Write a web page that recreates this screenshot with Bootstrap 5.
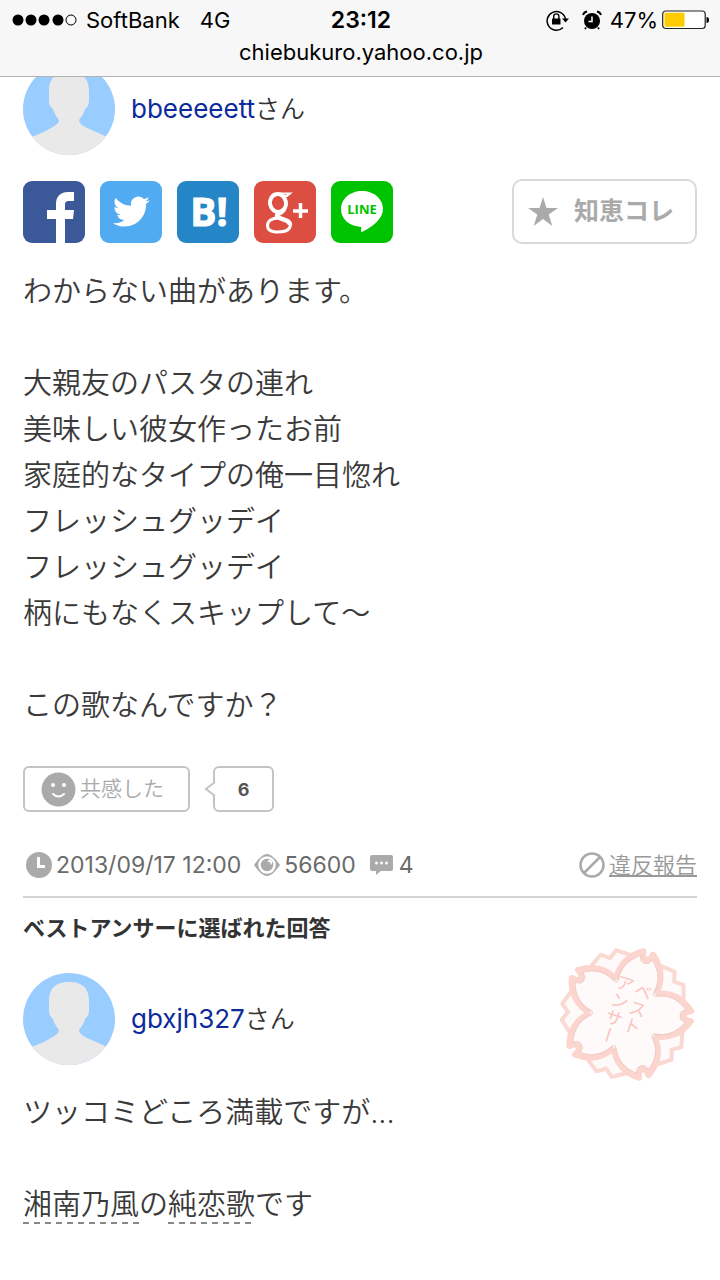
<!DOCTYPE html>
<html lang="ja">
<head>
<meta charset="utf-8">
<meta name="viewport" content="width=device-width, initial-scale=1">
<title>chiebukuro.yahoo.co.jp</title>
<link href="https://cdn.jsdelivr.net/npm/bootstrap@5.3.0/dist/css/bootstrap.min.css" rel="stylesheet">
<style>
  body { font-family: Inter, "Noto Sans CJK JP", sans-serif; color: #333; background: #fff; }
  svg { display: block; flex-shrink: 0; }
  .phone-bar { background: #f7f7f7; border-bottom: 1px solid #b2b2b2; color: #000; font-size: 22px; line-height: 32px; padding: 4px 10px 8px 12px; }
  .status-grid { display: grid; grid-template-columns: 1fr auto 1fr; }
  .clock { font-size: 23px; font-weight: 600; }
  .page { padding: 0 23px 30px; }
  .asker { margin-top: -14px; }
  .user-row { column-gap: 16px; font-size: 26px; }
  .user-row a { color: #0c2a9c; }
  .user-row .honorific { font-size: 25px; font-weight: 350; }
  .share-row { margin-top: 24px; }
  .share-list { gap: 15px; }
  .share-list svg { border-radius: 9px; }
  .collect { width: 185px; height: 65px; border: 2px solid #d9d9d9; border-radius: 10px; color: #aaa; font-size: 25px; font-weight: 700; gap: 16px; background: #fff; padding: 0 0 0 14px; }
  .post { font-size: 29px; line-height: 46px; font-weight: 350; color: #3a3a3a; }
  .question { margin-top: 25px; }
  .react-row { margin-top: 37px; gap: 23px; }
  .react { height: 46px; width: 167px; border: 2px solid #c4c4c4; border-radius: 6px; color: #aaa; font-size: 21px; font-weight: 350; gap: 4px; background: #fff; }
  .bubble { position: relative; height: 46px; width: 61px; border: 2px solid #c4c4c4; border-radius: 6px; color: #555; font-size: 18px; font-weight: 700; }
  .bubble svg { position: absolute; left: -11px; top: 12px; }
  .meta-row { margin-top: 35px; padding-bottom: 13px; border-bottom: 2px solid #d4d4d4; color: #6a6a6a; font-size: 23px; line-height: 36px; }
  .meta-list { gap: 13px; padding-left: 3px; }
  .meta-row .report { color: #999; font-size: 22px; font-weight: 350; gap: 4px; }
  .best-title { margin: 14px 0 0; font-size: 22px; line-height: 32px; font-weight: 700; }
  .answerer { margin-top: 29px; }
  .stamp { margin: -30px 0 -19px; }
  .answer { margin-top: 25px; }
  .keyword { color: inherit; text-decoration: none; background: repeating-linear-gradient(90deg, #888 0 6px, transparent 6px 11px) left bottom / 100% 2px no-repeat; padding-bottom: 2px; }
</style>
</head>
<body>
<svg width="0" height="0" class="position-absolute" aria-hidden="true">
  <defs>
    <symbol id="person" viewBox="0 0 92 92">
      <clipPath id="round"><circle cx="46" cy="46" r="46"/></clipPath>
      <g clip-path="url(#round)">
        <rect width="92" height="92" fill="#99ccff"/>
        <path fill="#e9e9e9" d="M26 28C26 14 34 9 46 9S66 14 66 28V38Q66 43 62 46C61 51 58 54 56 57Q56 61 64 65Q76 70 84 74V92H8V74Q20 70 28 65Q36 61 36 57C33 53 31 50 30 46Q26 43 26 38Z"/>
      </g>
    </symbol>
    <path id="petal" d="M29-21C44-24 57-17 65-5L60-4L57 0L60 4L65 5C57 17 44 24 29 21"/>
    <path id="petal-line" d="M27-19C42-22 53-15 60-6L55-4L54 0L55 4L60 6C53 15 42 22 27 19"/>
    <path id="leaf" d="M29-21L56-20L64-8L58 0L64 8L56 20L29 21"/>
  </defs>
</svg>

<header class="phone-bar sticky-top">
  <div class="status-grid align-items-center">
    <div class="d-flex align-items-center">
      <svg width="66" height="12" viewBox="0 0 66 12"><circle cx="6" cy="6" r="5.5"/><circle cx="19" cy="6" r="5.5"/><circle cx="32" cy="6" r="5.5"/><circle cx="46" cy="6" r="5.5"/><circle cx="59" cy="6" r="5" fill="none" stroke="#000"/></svg>
      <span class="ms-2">SoftBank</span><span class="ms-3 ps-1">4G</span>
    </div>
    <div class="clock">23:12</div>
    <div class="d-flex align-items-center justify-content-end">
      <svg width="24" height="22" viewBox="0 0 24 22"><path d="M17 18.500A9.300 9.300 0 1 1 19.500 10" fill="none" stroke="#000" stroke-width="1.500"/><path d="M16 9.500H23L19.500 13.500Z"/><rect x="6" y="9.500" width="8.500" height="6" rx=".6"/><path d="M7.700 10V7.500a2.600 2.600 0 0 1 5.200 0V10" fill="none" stroke="#000" stroke-width="1.400"/></svg>
      <svg class="ms-2 me-2 ps-1" width="24" height="20" viewBox="0 0 20 20"><circle cx="10" cy="11" r="8"/><path d="M10 6.500V11.500H6.500" fill="none" stroke="#fff" stroke-width="1.500"/><path d="M1 5Q2 2 5 1.500M19 5Q18 2 15 1.500M4 17.500L3 19M16 17.500L17 19" fill="none" stroke="#000" stroke-width="1.800"/></svg>
      <span>47%</span>
      <svg class="ms-1" width="48" height="20" viewBox="0 0 48 20"><rect x=".7" y="1" width="42.500" height="17.500" rx="3" fill="#fff" stroke="#222" stroke-width="1.200"/><rect x="2.500" y="2.800" width="20" height="14" rx="1" fill="#fc0"/><path d="M44.500 7Q47 7 47 10T44.500 13Z"/></svg>
    </div>
  </div>
  <div class="text-center">chiebukuro.yahoo.co.jp</div>
</header>

<main class="page">
  <div class="user-row asker d-flex align-items-center">
    <svg width="92" height="92"><use href="#person"/></svg>
    <div><a href="#" class="text-decoration-none">bbeeeeett</a><span class="honorific">さん</span></div>
  </div>

  <div class="share-row d-flex align-items-center justify-content-between">
    <div class="share-list d-flex">
      <a href="#" aria-label="Facebook"><svg width="62" height="62"><rect width="62" height="62" fill="#3b5998"/><path fill="#fff" d="M33 62V38H24V29H33V23C33 15 38 11 45 11H51V20H46C43 20 42 21 42 24V29H51L50 38H42V62Z"/></svg></a>
      <a href="#" aria-label="Twitter"><svg width="62" height="62"><rect width="62" height="62" fill="#50abf1"/><path fill="#fff" transform="translate(13 11) scale(2.300)" d="M5.026 15c6.038 0 9.341-5.003 9.341-9.334 0-.14 0-.282-.006-.422A6.685 6.685 0 0 0 16 3.542a6.658 6.658 0 0 1-1.889.518 3.301 3.301 0 0 0 1.447-1.817 6.533 6.533 0 0 1-2.087.793A3.286 3.286 0 0 0 7.875 6.030a9.325 9.325 0 0 1-6.767-3.429 3.289 3.289 0 0 0 1.018 4.382A3.323 3.323 0 0 1 .64 6.575v.045a3.288 3.288 0 0 0 2.632 3.218 3.203 3.203 0 0 1-.865.115 3.230 3.230 0 0 1-.614-.057 3.283 3.283 0 0 0 3.067 2.277A6.588 6.588 0 0 1 .78 13.580a6.320 6.320 0 0 1-.78-.045A9.344 9.344 0 0 0 5.026 15z"/></svg></a>
      <a href="#" aria-label="はてなブックマーク"><svg width="62" height="62"><rect width="62" height="62" fill="#2586c7"/><text x="32" y="45" text-anchor="middle" fill="#fff" stroke="#fff" font-family="Open Sans, sans-serif" font-weight="700" font-size="39">B!</text></svg></a>
      <a href="#" aria-label="Google+"><svg width="62" height="62"><rect width="62" height="62" fill="#dc4e41"/><g fill="none" stroke="#fff"><ellipse cx="24" cy="22" rx="8" ry="9" stroke-width="4" transform="rotate(-12 24 22)"/><path d="M24 12.500H36L33 15H28" stroke-width="2"/><path d="M30 28C29 32 23 32 23 35C23 38 36 38 36 44" stroke-width="4.500"/><path d="M25 37C18 37 13.500 40 13.500 44.500C13.500 49 18 51 24 51C32 51 36.500 48 36.500 43" stroke-width="3"/><path d="M39 30H54M46.500 22V37" stroke-width="3.500"/></g></svg></a>
      <a href="#" aria-label="LINE"><svg width="62" height="62"><rect width="62" height="62" fill="#00c300"/><path fill="#fff" d="M31 10C43 10 52 18 52 28C52 38 41 46 31 51C29 51 31 48 30 46C18 45 10 38 10 28S19 10 31 10Z"/><text x="31" y="33" text-anchor="middle" fill="#00c300" font-family="Open Sans, sans-serif" font-weight="700" font-size="13">LINE</text></svg></a>
    </div>
    <button type="button" class="collect d-flex align-items-center">
      <svg width="30" height="29" viewBox="0 0 30 29"><path fill="#aaa" d="M15 0L18.500 11H30L20.700 17.600L24.300 29L15 22L5.700 29L9.300 17.600L0 11H11.500Z"/></svg>
      <span>知恵コレ</span>
    </button>
  </div>

  <div class="post question">わからない曲があります。<br><br>大親友のパスタの連れ<br>美味しい彼女作ったお前<br>家庭的なタイプの俺一目惚れ<br>フレッシュグッデイ<br>フレッシュグッデイ<br>柄にもなくスキップして〜<br><br>この歌なんですか？</div>

  <div class="react-row d-flex">
    <button type="button" class="react d-flex align-items-center p-0 ps-3">
      <svg width="35" height="35"><circle cx="17.500" cy="17.500" r="17" fill="#aaa"/><circle cx="12" cy="13" r="2" fill="#fff"/><circle cx="23" cy="13" r="2" fill="#fff"/><path d="M12 22Q17.500 27 23 22" fill="none" stroke="#fff" stroke-width="2" stroke-linecap="round"/></svg>
      <span>共感した</span>
    </button>
    <div class="bubble d-flex align-items-center justify-content-center">
      <svg width="12" height="18"><path d="M11 2L2 9L11 16" fill="#fff" stroke="#c4c4c4" stroke-width="2"/></svg>6
    </div>
  </div>

  <div class="meta-row d-flex justify-content-between align-items-center">
    <div class="meta-list d-flex align-items-center">
      <div class="d-flex align-items-center">
        <svg class="me-1" width="26" height="26"><circle cx="13" cy="13" r="13" fill="#aaa"/><path d="M12.500 5V14.500H19" fill="none" stroke="#fff" stroke-width="3"/></svg>
        <span>2013/09/17 12:00</span>
      </div>
      <div class="d-flex align-items-center">
        <svg class="me-1" width="26" height="24"><path d="M0 12C5 5 9 1 13 1S21 5 26 12C21 19 17 23 13 23S5 19 0 12Z" fill="#aaa"/><circle cx="13" cy="12" r="7.500" fill="none" stroke="#fff" stroke-width="2.500"/><circle cx="15.500" cy="9.500" r="2.500" fill="#fff"/><circle cx="14" cy="11" r="2.500" fill="#aaa"/></svg>
        <span>56600</span>
      </div>
      <div class="d-flex align-items-center">
        <svg class="me-1" width="26" height="22"><path fill="#aaa" d="M3 1H22Q24 1 24 3V15Q24 17 22 17H12L7 21V17H3Q1 17 1 15V3Q1 1 3 1Z"/><g fill="#fff"><circle cx="7.500" cy="9" r="1.500"/><circle cx="12.500" cy="9" r="1.500"/><circle cx="17.500" cy="9" r="1.500"/></g></svg>
        <span>4</span>
      </div>
    </div>
    <a href="#" class="report d-flex align-items-center"><svg width="26" height="26"><g fill="none" stroke="#aaa" stroke-width="2.500"><circle cx="13" cy="13" r="11.500"/><path d="M5 21L21 5"/></g></svg><span>違反報告</span></a>
  </div>

  <h2 class="best-title">ベストアンサーに選ばれた回答</h2>

  <div class="answerer d-flex align-items-center justify-content-between">
    <div class="user-row d-flex align-items-center">
      <svg width="92" height="92"><use href="#person"/></svg>
      <div><a href="#" class="text-decoration-none">gbxjh327</a><span class="honorific">さん</span></div>
    </div>
    <svg class="stamp" width="141" height="141" viewBox="0 0 141 141" role="img" aria-label="ベストアンサー">
      <g transform="translate(70 71)" stroke-linejoin="round">
        <g fill="#fffafa" stroke="#fbd9d3" stroke-width="4">
          <use href="#leaf" transform="rotate(38)"/><use href="#leaf" transform="rotate(110)"/><use href="#leaf" transform="rotate(182)"/><use href="#leaf" transform="rotate(254)"/><use href="#leaf" transform="rotate(326)"/>
        </g>
        <g fill="#fffafa" stroke="#fbd5ce" stroke-width="6">
          <use href="#petal" transform="rotate(2)"/><use href="#petal" transform="rotate(74)"/><use href="#petal" transform="rotate(146)"/><use href="#petal" transform="rotate(218)"/><use href="#petal" transform="rotate(290)"/>
        </g>
        <circle r="34" fill="#fffafa"/>
        <g fill="none" stroke="#efcdc8" stroke-width="1">
          <use href="#petal-line" transform="rotate(2)"/><use href="#petal-line" transform="rotate(74)"/><use href="#petal-line" transform="rotate(146)"/><use href="#petal-line" transform="rotate(218)"/><use href="#petal-line" transform="rotate(290)"/>
        </g>
      </g>
      <g fill="#f9c5be" font-size="18" font-weight="400" font-family="Noto Sans CJK JP, sans-serif" style="writing-mode: vertical-rl">
        <text transform="translate(90 40) rotate(18)">ベスト</text>
        <text transform="translate(72 32) rotate(18)">アンサー</text>
      </g>
    </svg>
  </div>

  <div class="post answer">ツッコミどころ満載ですが...<br><br><a href="#" class="keyword">湘南乃風</a>の<a href="#" class="keyword">純恋歌</a>です</div>
</main>
<script src="https://cdn.jsdelivr.net/npm/bootstrap@5.3.0/dist/js/bootstrap.bundle.min.js"></script>
</body>
</html>
